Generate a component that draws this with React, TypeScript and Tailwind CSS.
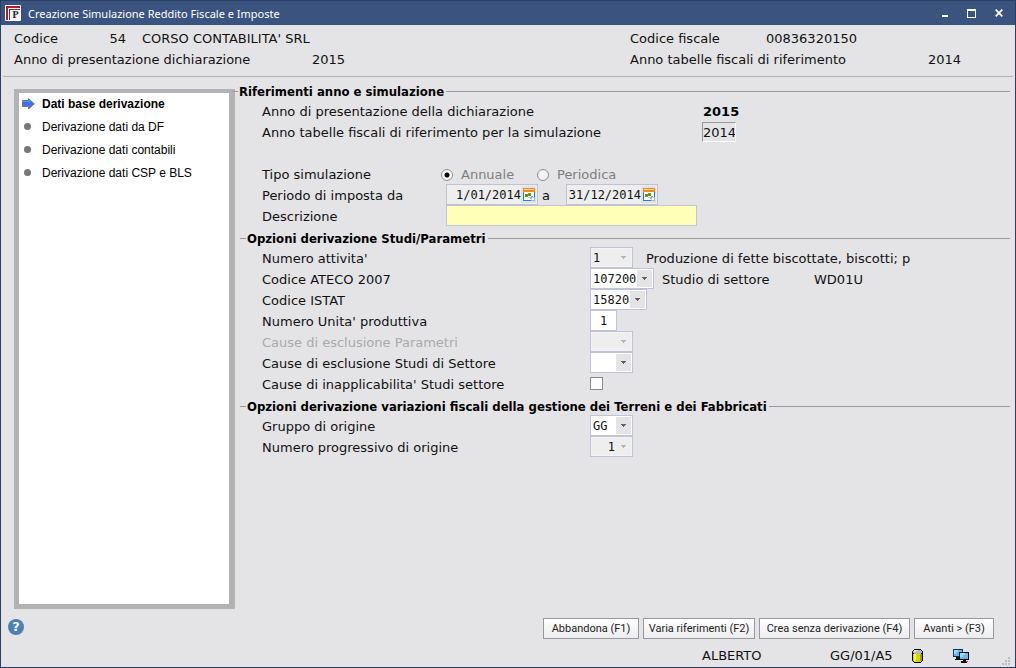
import React, { useState } from "react";

type SelectFieldProps = {
  id: string;
  value: string;
  width: string;
  disabled?: boolean;
  alignEnd?: boolean;
};

function SelectField({ id, value, width, disabled = false, alignEnd = false }: SelectFieldProps) {
  return (
    <span
      className={`relative flex h-[21px] border border-[#c0c2d6] p-px ${width} ${disabled ? "bg-[#f4f4f4]" : "bg-white"}`}
    >
      <select
        id={id}
        disabled={disabled}
        defaultValue={value}
        className={`w-full appearance-none pt-px pr-4 pl-px text-[12px] leading-4 text-[#111] opacity-100 outline-none ${
          disabled ? "bg-[#eeeeef]" : "bg-white"
        } ${alignEnd ? "[text-align-last:right]" : ""} [font-family:'DejaVu_Sans_Mono',monospace]`}
      >
        <option value={value}>{value}</option>
      </select>
      <span
        className={`pointer-events-none absolute top-px right-px bottom-px flex w-[15px] justify-center pt-[7px] ${
          disabled ? "bg-[#eeeeef] text-[#b4b4b4]" : "bg-[#e4e4e6] text-[#606060]"
        }`}
      >
        <svg width="5" height="3" viewBox="0 0 5 3" fill="currentColor" aria-hidden="true" shapeRendering="crispEdges">
          <path d="M0 0H5V1H4V2H3V3H2V2H1V1H0Z" />
        </svg>
      </span>
    </span>
  );
}

function CalendarIcon() {
  return (
    <svg width="12" height="13" viewBox="0 0 12 13" aria-hidden="true" shapeRendering="crispEdges">
      <rect x="0" y="0" width="12" height="4" fill="#f58a1f" />
      <rect x="1" y="1" width="10" height="1" fill="#ffd9a8" />
      <path d="M0 4H12V9H8V13H0Z" fill="#2484c0" />
      <path d="M8 9H12V13H8Z" fill="#a9b4be" />
      <rect x="1" y="4" width="10" height="8" fill="#fff" />
      <path d="M2 6H5V5H8V8H5V9H2Z" fill="#6aa800" />
      <path d="M3 7H4V8H3ZM6 6H7V7H6Z" fill="#3f7000" />
      <path d="M7 9H8V8H10V9H9V11H7Z" fill="#86b4e0" />
      <path d="M9 9H11V10H9ZM5 9H7V10H5ZM8 11H9V12H8Z" fill="#b9d3ee" />
    </svg>
  );
}

function DateField({ id, label, value }: { id: string; label: string; value: string }) {
  return (
    <span className="flex h-[21px] w-[92px] items-center border border-[#c0c2d6] bg-[#eeeeef] pr-px">
      <input
        id={id}
        aria-label={label}
        defaultValue={value}
        className="h-full w-[74px] bg-transparent pt-px text-right text-[12px] text-[#111] outline-none [font-family:'DejaVu_Sans_Mono',monospace]"
      />
      <button type="button" aria-label={`Calendario ${label}`} className="flex h-[17px] flex-1 items-center justify-center bg-[#e2e2e4]">
        <CalendarIcon />
      </button>
    </span>
  );
}

function GroupTitle({ children, className = "" }: { children: React.ReactNode; className?: string }) {
  return (
    <h2 className={`flex h-[21px] items-center gap-px pt-1 text-[13px] leading-4 font-bold whitespace-nowrap text-black [font-family:'DejaVu_Sans_Condensed','Noto_Sans',sans-serif] ${className}`}>
      <span className="h-px w-[6px] bg-[#999]" />
      <span>{children}</span>
      <span className="ml-px h-px flex-1 bg-[#999]" />
    </h2>
  );
}

type RowProps = { label: string; htmlFor?: string; labelWidth: string; muted?: boolean; children?: React.ReactNode };

function Row({ label, htmlFor, labelWidth, muted = false, children }: RowProps) {
  const look = `shrink-0 pt-[2px] ${labelWidth} ${muted ? "text-[#a9a9ab]" : ""}`;
  return (
    <div className="flex h-[21px] items-center pl-[22px] leading-[19px] whitespace-nowrap">
      {htmlFor ? (
        <label htmlFor={htmlFor} className={look}>
          {label}
        </label>
      ) : (
        <span className={look}>{label}</span>
      )}
      {children}
    </div>
  );
}

function Radio({ id, label, checked, onSelect }: { id: string; label: string; checked: boolean; onSelect: () => void }) {
  return (
    <span className="flex w-24 items-center gap-2 pt-[2px]">
      <input
        id={id}
        type="radio"
        name="tipo"
        checked={checked}
        onChange={onSelect}
        className="size-3 appearance-none rounded-full border border-[#8c8c8c] bg-[#f3f3f3] checked:bg-[radial-gradient(circle,#000_2px,#f8f8f8_3px)]"
      />
      <label htmlFor={id} className="text-[#7d7d7f]">
        {label}
      </label>
    </span>
  );
}

const steps = ["Dati base derivazione", "Derivazione dati da DF", "Derivazione dati contabili", "Derivazione dati CSP e BLS"];

const actions = [
  { label: "Abbandona (F1)", width: "w-24" },
  { label: "Varia riferimenti (F2)", width: "w-28" },
  { label: "Crea senza derivazione (F4)", width: "w-[151px]" },
  { label: "Avanti > (F3)", width: "w-20" },
];

export default function App() {
  const [tipo, setTipo] = useState("annuale");
  const [current, setCurrent] = useState(0);

  return (
    <div className="flex min-h-screen flex-col border border-[#2b3f66] bg-[#e4e4e6] text-[13px] text-[#111] [font-family:'DejaVu_Sans',sans-serif]">
      <header className="flex h-6 items-center bg-[#3a537f] pr-[3px] pl-1 text-white">
        <svg width="16" height="16" viewBox="0 0 16 16" aria-hidden="true">
          <rect width="16" height="16" rx="1" fill="#fff" />
          <path d="M1 1H15V3H3V15H1Z" fill="#b01c2e" />
          <path d="M4 4H15V5H5V15H4Z" fill="#8e2330" />
          <path d="M6 6H15V15H6Z" fill="#f4f4f4" />
          <text x="10.500" y="13" textAnchor="middle" fontSize="10" fontWeight="bold" fill="#222" fontFamily="Liberation Serif, serif">
            P
          </text>
        </svg>
        <h1 className="ml-[7px] flex-1 pt-[2px] text-[11px] [font-family:'Noto_Sans',sans-serif]">Creazione Simulazione Reddito Fiscale e Imposte</h1>
        <button type="button" aria-label="Riduci a icona" className="flex h-6 w-[27px] items-center justify-center">
          <svg width="10" height="10" viewBox="0 0 10 10" aria-hidden="true" shapeRendering="crispEdges">
            <rect x="2" y="7" width="6" height="2" fill="#fff" />
          </svg>
        </button>
        <button type="button" aria-label="Ingrandisci" className="flex h-6 w-[27px] items-center justify-center">
          <svg width="9" height="9" viewBox="0 0 9 9" aria-hidden="true" shapeRendering="crispEdges">
            <path d="M0 0H9V9H0ZM1 2V8H8V2Z" fill="#fff" fillRule="evenodd" />
          </svg>
        </button>
        <button type="button" aria-label="Chiudi" className="flex h-6 w-[27px] items-center justify-center">
          <svg width="8" height="8" viewBox="0 0 8 8" aria-hidden="true">
            <path d="M0.700 0.700L7.300 7.300M7.300 0.700L0.700 7.300" stroke="#fff" strokeWidth="1.800" />
          </svg>
        </button>
      </header>

      <section className="mx-[2px] flex h-[52px] border-b border-[#b2b2b4] pt-[3px] pl-[11px] leading-[21px] whitespace-nowrap">
        <div className="flex-1">
          <div className="flex">
            <span className="w-[82px]">Codice</span>
            <span className="w-[30px] text-right">54</span>
            <span className="ml-4">CORSO CONTABILITA' SRL</span>
          </div>
          <div className="flex">
            <span className="w-[298px]">Anno di presentazione dichiarazione</span>
            <span>2015</span>
          </div>
        </div>
        <div className="w-[383px]">
          <div className="flex">
            <span className="w-[136px]">Codice fiscale</span>
            <span>00836320150</span>
          </div>
          <div className="flex">
            <span className="w-[298px]">Anno tabelle fiscali di riferimento</span>
            <span>2014</span>
          </div>
        </div>
      </section>

      <main className="flex flex-1 pr-[5px] pl-[13px]">
        <nav className="mt-3 w-[221px] shrink-0 border-4 border-r-[6px] border-b-[5px] border-l-[5px] border-[#b3b3b3] bg-white text-[12px] [font-family:'Liberation_Sans',sans-serif]">
          <ul className="-mt-px">
            {steps.map((step, i) => (
              <li key={step}>
                <button
                  type="button"
                  onClick={() => setCurrent(i)}
                  className={`flex h-[23px] w-full items-center text-left text-black ${i === current ? "font-bold" : ""}`}
                >
                  <span className="flex w-[23px] pl-[3px]">
                    {i === current ? (
                      <svg width="13" height="12" viewBox="0 0 13 12" aria-hidden="true">
                        <path d="M0.500 2.500H6.500V0.700L12.300 5.800L6.500 11V8.500H0.500Z" fill="#3f6ff2" stroke="#777" />
                        <path d="M1 3.500H7.500V2" fill="none" stroke="#19b4ea" />
                      </svg>
                    ) : (
                      <span className="ml-[2px] size-[7px] rounded-full bg-[#777]" />
                    )}
                  </span>
                  {step}
                </button>
              </li>
            ))}
          </ul>
        </nav>

        <form className="ml-[5px] min-w-0 flex-1 pt-[2px]">
          <GroupTitle className="-ml-2">Riferimenti anno e simulazione</GroupTitle>
          <Row label="Anno di presentazione della dichiarazione" labelWidth="w-[440px]">
            <span className="pt-[2px] pl-px font-bold text-black">2015</span>
          </Row>
          <Row label="Anno tabelle fiscali di riferimento per la simulazione" htmlFor="anno-tabelle" labelWidth="w-[440px]">
            <input
              id="anno-tabelle"
              defaultValue="2014"
              className="h-5 w-[34px] border border-t-[#999] border-r-white border-b-white border-l-[#999] bg-transparent pt-px text-[13px] outline-none"
            />
          </Row>
          <div className="h-[21px]" />
          <Row label="Tipo simulazione" labelWidth="w-[179px]">
            <Radio id="annuale" label="Annuale" checked={tipo === "annuale"} onSelect={() => setTipo("annuale")} />
            <Radio id="periodica" label="Periodica" checked={tipo === "periodica"} onSelect={() => setTipo("periodica")} />
          </Row>
          <Row label="Periodo di imposta da" htmlFor="data-da" labelWidth="w-[184px]">
            <DateField id="data-da" label="da" value="1/01/2014" />
            <span className="w-7 pt-[2px] pl-1">a</span>
            <DateField id="data-a" label="a" value="31/12/2014" />
          </Row>
          <Row label="Descrizione" htmlFor="descrizione" labelWidth="w-[184px]">
            <input id="descrizione" className="h-[21px] w-[251px] border border-[#c0c2d6] bg-[#ffffb8] px-1 outline-none" />
          </Row>

          <GroupTitle>Opzioni derivazione Studi/Parametri</GroupTitle>
          <Row label="Numero attivita'" htmlFor="attivita" labelWidth="w-[328px]">
            <SelectField id="attivita" value="1" width="w-[43px]" disabled />
            <span className="ml-[13px] pt-[2px]">Produzione di fette biscottate, biscotti; p</span>
          </Row>
          <Row label="Codice ATECO 2007" htmlFor="ateco" labelWidth="w-[328px]">
            <SelectField id="ateco" value="107200" width="w-16" />
            <span className="ml-2 w-[152px] pt-[2px]">Studio di settore</span>
            <span className="pt-[2px]">WD01U</span>
          </Row>
          <Row label="Codice ISTAT" htmlFor="istat" labelWidth="w-[328px]">
            <SelectField id="istat" value="15820" width="w-[57px]" />
          </Row>
          <Row label="Numero Unita' produttiva" htmlFor="unita" labelWidth="w-[328px]">
            <input
              id="unita"
              defaultValue="1"
              className="h-[21px] w-[27px] border border-[#c0c2d6] bg-white pt-px text-center text-[12px] outline-none [font-family:'DejaVu_Sans_Mono',monospace]"
            />
          </Row>
          <Row label="Cause di esclusione Parametri" htmlFor="escl-parametri" labelWidth="w-[328px]" muted>
            <SelectField id="escl-parametri" value="" width="w-[43px]" disabled />
          </Row>
          <Row label="Cause di esclusione Studi di Settore" htmlFor="escl-studi" labelWidth="w-[328px]">
            <SelectField id="escl-studi" value="" width="w-[43px]" />
          </Row>
          <Row label="Cause di inapplicabilita' Studi settore" htmlFor="inapplicabilita" labelWidth="w-[328px]">
            <input
              id="inapplicabilita"
              type="checkbox"
              className="size-[13px] appearance-none border border-[#8a8a8a] bg-white checked:bg-[#606060]"
            />
          </Row>

          <GroupTitle>Opzioni derivazione variazioni fiscali della gestione dei Terreni e dei Fabbricati</GroupTitle>
          <Row label="Gruppo di origine" htmlFor="gruppo" labelWidth="w-[328px]">
            <SelectField id="gruppo" value="GG" width="w-[43px]" />
          </Row>
          <Row label="Numero progressivo di origine" htmlFor="progressivo" labelWidth="w-[328px]">
            <SelectField id="progressivo" value="1" width="w-[43px]" disabled alignEnd />
          </Row>
        </form>
      </main>

      <footer className="pt-[9px]">
        <div className="flex items-start gap-1 pr-[21px] pl-[7px]">
          <button type="button" aria-label="Aiuto" className="mt-px mr-auto flex size-4 items-center justify-center rounded-full bg-[#4b7fb5] text-[13px] leading-4 font-bold text-white">
            ?
          </button>
          {actions.map((action) => (
            <button
              key={action.label}
              type="button"
              className={`h-[21px] border border-[#98989a] bg-linear-to-b from-white to-[#ececee] pt-[2px] text-[11px] whitespace-nowrap text-[#222] [font-family:'Roboto',sans-serif] ${action.width}`}
            >
              {action.label}
            </button>
          ))}
        </div>
        <div className="flex h-7 items-center justify-end pt-[6px] pr-[3px]">
          <span className="w-32">ALBERTO</span>
          <span className="w-[82px]">GG/01/A5</span>
          <svg width="12" height="14" viewBox="0 0 12 14" aria-hidden="true" shapeRendering="crispEdges">
            <path d="M2 0H9V1H10V2H11V12H10V13H9V14H2V13H1V12H0V2H1V1H2Z" fill="#000" />
            <path d="M2 1H9V2H10V4H9V5H2V4H1V2H2Z" fill="#b8b8b8" />
            <path d="M2 1H6V2H4V3H2Z" fill="#e6e6e6" />
            <path d="M1 5H10V12H9V13H2V12H1Z" fill="#d4d400" />
            <path d="M2 5H4V12H2Z" fill="#f6f65a" />
            <path d="M8 5H10V12H8Z" fill="#a0a000" />
          </svg>
          <svg width="17" height="14" viewBox="0 0 17 14" className="ml-[29px]" aria-hidden="true" shapeRendering="crispEdges">
            <path d="M0 0H10V8H0Z" fill="#0b3550" />
            <path d="M1 1H9V7H1Z" fill="#62b8f4" />
            <path d="M1 1H5V3H3V5H1Z" fill="#9bdcff" />
            <path d="M3 8H6V9H7V11H2V10H3Z" fill="#111" />
            <path d="M6 3H16V11H6Z" fill="#000" />
            <path d="M7 4H15V10H7Z" fill="#62b8f4" />
            <path d="M7 4H12V6H10V8H7Z" fill="#9bdcff" />
            <path d="M10 11H13V12H14V14H8V12H10Z" fill="#111" />
            <path d="M13 12H15V13H13Z" fill="#d33" />
          </svg>
          <svg width="10" height="10" viewBox="0 0 10 10" className="ml-8 self-end" aria-hidden="true" shapeRendering="crispEdges">
            <path d="M6 0H8V2H6ZM3 3H5V5H3ZM6 3H8V5H6ZM0 6H2V8H0ZM3 6H5V8H3ZM6 6H8V8H6Z" fill="#bdbdbf" />
          </svg>
        </div>
      </footer>
    </div>
  );
}
